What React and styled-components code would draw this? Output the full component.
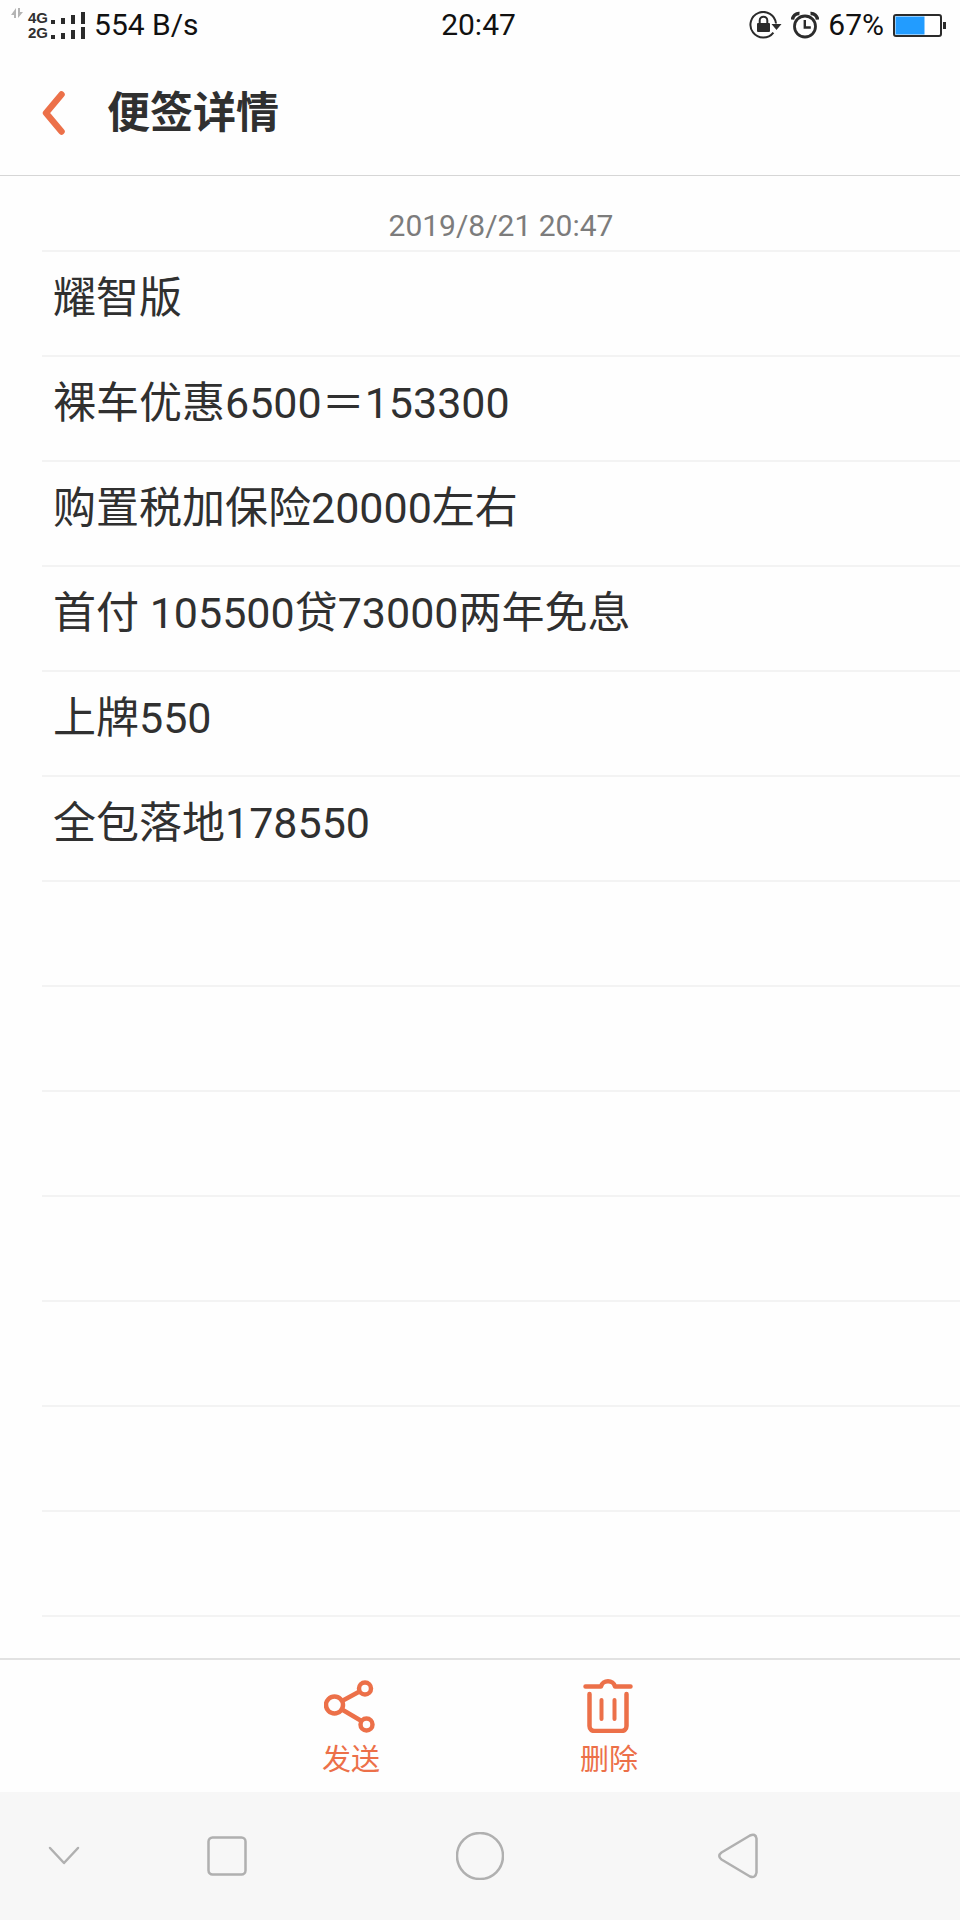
import React from "react";
import styled, { createGlobalStyle } from "styled-components";

const color = {
  orange: "#ec7049",
  text: "#303030",
  gray: "#7c7c7c",
  nav: "#b0b0b0"
};

const noteLines = [
  "耀智版",
  "裸车优惠6500＝153300",
  "购置税加保险20000左右",
  "首付 105500贷73000两年免息",
  "上牌550",
  "全包落地178550"
];

const LINE_COUNT = 13;

const SignalBars = () => (
  <svg width="34" height="12" viewBox="0 0 34 12" fill="#2b2b2b">
    <rect x="0" y="8" width="4" height="4" />
    <rect x="10" y="6" width="4" height="6" />
    <rect x="20" y="3" width="4" height="9" />
    <rect x="30" y="0" width="4" height="12" />
  </svg>
);

const DataArrows = () => (
  <svg width="12" height="11" viewBox="0 0 12 11" fill="#b4b4b4">
    <path d="M5 0v10H3V7H0z" />
    <path d="M7 0h2v4h3L7 10z" />
  </svg>
);

const RotationLock = () => (
  <svg width="33" height="28" viewBox="0 0 33 28" fill="none">
    <path
      d="M24.4 21.6A12.8 12.8 0 1 1 27 12.5"
      stroke="#2b2b2b"
      strokeWidth="2"
    />
    <path d="M22.5 13h10l-5 6z" fill="#2b2b2b" />
    <rect x="8" y="12" width="13" height="9" rx="1" fill="#2b2b2b" />
    <path d="M10.7 13V9.500a3.800 3.800 0 0 1 7.600 0V13" stroke="#2b2b2b" strokeWidth="2" />
  </svg>
);

const AlarmIcon = () => (
  <svg width="28" height="28" viewBox="0 0 28 28" fill="none" stroke="#2b2b2b">
    <circle cx="14" cy="15.500" r="10.500" strokeWidth="2.800" />
    <path d="M13.800 9v7.500h6" strokeWidth="2.400" />
    <path d="M1.500 8.500a6.500 6.500 0 0 1 7-6M26.500 8.500a6.500 6.500 0 0 0-7-6" strokeWidth="3.500" />
  </svg>
);

const BatteryIcon = () => (
  <svg width="53" height="23" viewBox="0 0 53 23">
    <rect x="1" y="1" width="47" height="21" rx="2" fill="#fff" stroke="#2b2b2b" strokeWidth="2" />
    <rect x="2.500" y="2.500" width="29" height="18" fill="#229cff" />
    <rect x="50" y="8" width="3" height="7" fill="#2b2b2b" />
  </svg>
);

const BackIcon = () => (
  <svg width="24" height="44" viewBox="0 0 24 44" fill="none">
    <path
      d="M19.500 3.500L4 22l15.500 18.500"
      stroke={color.orange}
      strokeWidth="6.500"
      strokeLinecap="round"
      strokeLinejoin="round"
    />
  </svg>
);

const ShareIcon = () => (
  <svg width="54" height="56" viewBox="0 0 54 56" fill="none" stroke={color.orange} strokeWidth="4.500">
    <circle cx="10.500" cy="28" r="8.500" />
    <circle cx="41" cy="11.500" r="6" />
    <circle cx="42.500" cy="47.500" r="6" />
    <path d="M18 24l17.500-9.500M18 32.500l19.500 11.500" />
  </svg>
);

const TrashIcon = () => (
  <svg
    width="52"
    height="56"
    viewBox="0 0 52 56"
    fill="none"
    stroke={color.orange}
    strokeWidth="4.500"
    strokeLinecap="round"
    strokeLinejoin="round"
  >
    <path d="M2.500 9.500H18c1.500-7 12.500-7 14 0h15.500" />
    <path d="M6.500 17v32a5 5 0 0 0 5 5h27a5 5 0 0 0 5-5V17" />
    <path d="M18.500 23v19M31.500 23v19" strokeWidth="4" />
  </svg>
);

const Note = () => (
  <NoteWrap>
    <NoteDate dateTime="2019-08-21T20:47">2019/8/21 20:47</NoteDate>
    {Array.from({ length: LINE_COUNT }, (_, i) => (
      <NoteLine key={i}>{noteLines[i]}</NoteLine>
    ))}
  </NoteWrap>
);

const App = () => {
  return (
    <>
      <GlobalStyle />
      <Screen>
        <StatusBar>
          <StatusGroup>
            <DataArrows />
            <Networks>
              <Network>
                4G
                <SignalBars />
              </Network>
              <Network>
                2G
                <SignalBars />
              </Network>
            </Networks>
            <StatusText>554 B/s</StatusText>
          </StatusGroup>
          <StatusText>20:47</StatusText>
          <StatusGroup end>
            <RotationLock />
            <AlarmIcon />
            <StatusText>67%</StatusText>
            <BatteryIcon />
          </StatusGroup>
        </StatusBar>
        <Header>
          <BackButton aria-label="返回">
            <BackIcon />
          </BackButton>
          <Title>便签详情</Title>
        </Header>
        <Note />
        <Toolbar>
          <ToolButton>
            <ShareIcon />
            发送
          </ToolButton>
          <ToolButton>
            <TrashIcon />
            删除
          </ToolButton>
        </Toolbar>
        <NavBar>
          <NavButton aria-label="收起">
            <svg width="32" height="20" viewBox="0 0 32 20">
              <path d="M2 2l14 15L30 2" />
            </svg>
          </NavButton>
          <NavButton aria-label="最近任务">
            <svg width="40" height="40" viewBox="0 0 40 40">
              <rect x="1.500" y="1.500" width="37" height="37" rx="4" />
            </svg>
          </NavButton>
          <NavButton aria-label="主页">
            <svg width="48" height="48" viewBox="0 0 48 48">
              <circle cx="24" cy="24" r="23" />
            </svg>
          </NavButton>
          <NavButton aria-label="后退">
            <svg width="40" height="46" viewBox="0 0 40 46">
              <path d="M3.500 19.500L32 2.500Q37.500 0 38.500 5.500V39.500Q37.500 45.500 32 43.500L3.500 26.500Q-1 23 3.500 19.500z" />
            </svg>
          </NavButton>
        </NavBar>
      </Screen>
    </>
  );
};
export default App;

const GlobalStyle = createGlobalStyle`
  * {
    box-sizing: border-box;
  }
  body {
    margin: 0;
    background: #fefefe;
    color: ${color.text};
    font-family: Roboto, "Noto Sans CJK SC", sans-serif;
  }
  button {
    padding: 0;
    border: 0;
    background: none;
    font-family: inherit;
    cursor: pointer;
  }
  svg {
    display: block;
    flex: none;
  }
`;

const Screen = styled.div`
  display: flex;
  flex-direction: column;
  min-height: 100vh;
`;

const StatusBar = styled.div`
  display: grid;
  grid-template-columns: 1fr auto 1fr;
  align-items: center;
  height: 50px;
  padding: 0 14px 0 11px;
  color: #111;
`;

const StatusGroup = styled.div`
  display: flex;
  align-items: center;
  justify-content: ${props => (props.end ? "flex-end" : "flex-start")};
  gap: 9px;

  > svg:first-child {
    align-self: ${props => (props.end ? "center" : "flex-start")};
  }
`;

const StatusText = styled.span`
  font-size: 30px;
  line-height: 34px;
`;

const Networks = styled.div`
  margin-left: -4px;
`;

const Network = styled.div`
  display: flex;
  align-items: center;
  gap: 3px;
  color: ${color.text};
  font-family: "Liberation Sans", sans-serif;
  font-size: 15px;
  font-weight: 700;
  line-height: 15px;
`;

const Header = styled.header`
  display: flex;
  align-items: center;
  height: 126px;
  padding-left: 42px;
  border-bottom: 1px solid #d6d6d6;
`;

const BackButton = styled.button`
  width: 65px;
`;

const Title = styled.h1`
  margin: 0;
  font-size: 43px;
  font-weight: 700;
  line-height: 60px;
`;

const NoteWrap = styled.main`
  flex: 1;
  padding-left: 42px;
`;

const NoteDate = styled.time`
  display: block;
  height: 76px;
  padding-top: 32px;
  border-bottom: 2px solid #f3f3f3;
  color: ${color.gray};
  font-size: 30px;
  line-height: 36px;
  text-align: center;
`;

const NoteLine = styled.p`
  height: 105px;
  margin: 0;
  padding: 14px 11px;
  border-bottom: 2px solid #f3f3f3;
  font-size: 43px;
  line-height: 64px;
`;

const Toolbar = styled.div`
  display: flex;
  justify-content: center;
  height: 134px;
  border-top: 2px solid #e2e2e2;
`;

const ToolButton = styled.button`
  display: flex;
  flex-direction: column;
  align-items: center;
  width: 258px;
  padding-top: 17px;
  color: ${color.orange};
  font-size: 29px;
  line-height: 54px;
`;

const NavBar = styled.nav`
  display: grid;
  grid-template-columns: 128fr 198fr 308fr 208fr 118fr;
  height: 128px;
  background: #f7f7f7;
`;

const NavButton = styled.button`
  display: flex;
  align-items: center;
  justify-content: center;

  svg {
    fill: none;
    stroke: ${color.nav};
    stroke-width: 2.5;
    stroke-linecap: round;
    stroke-linejoin: round;
  }
`;
